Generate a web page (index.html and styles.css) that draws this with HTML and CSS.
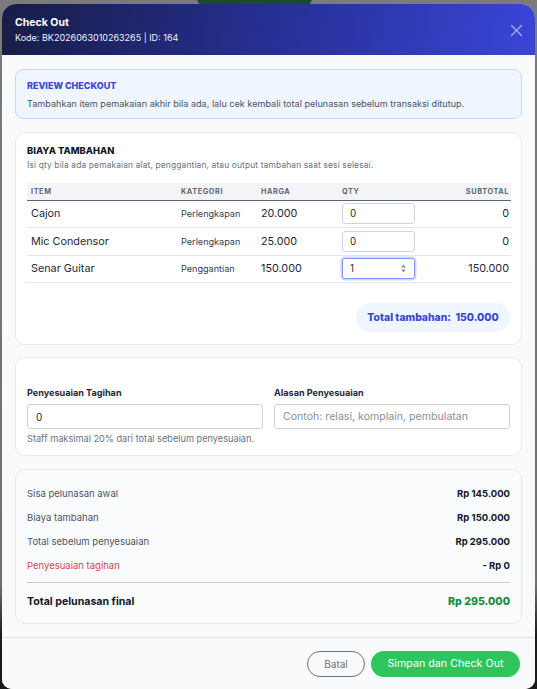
FILE: index.html
```html
<!DOCTYPE html>
<html lang="id">
<head>
<meta charset="utf-8">
<title>Check Out</title>
<link rel="stylesheet" href="styles.css">
</head>
<body>
<div class="backdrop">
  <div class="bg-pill"></div>
  <div class="modal">
    <header class="modal-head">
      <div class="head-text">
        <div class="title">Check Out</div>
        <div class="sub">Kode: BK2026063010263265 | ID: 164</div>
      </div>
      <svg class="close" width="13" height="13" viewBox="0 0 13 13"><path d="M1.5 1.5L11.5 11.5M11.5 1.5L1.5 11.5" stroke="#a9aeea" stroke-width="1.3" fill="none" stroke-linecap="round"/></svg>
    </header>
    <main class="modal-body">
      <section class="review">
        <div class="review-title">REVIEW CHECKOUT</div>
        <div class="review-text">Tambahkan item pemakaian akhir bila ada, lalu cek kembali total pelunasan sebelum transaksi ditutup.</div>
      </section>

      <section class="card card-items">
        <div class="card-title">BIAYA TAMBAHAN</div>
        <div class="card-sub">Isi qty bila ada pemakaian alat, penggantian, atau output tambahan saat sesi selesai.</div>
        <table class="items">
          <colgroup><col class="c-item"><col class="c-kat"><col class="c-harga"><col class="c-qty"><col class="c-sub"></colgroup>
          <thead>
            <tr><th>ITEM</th><th>KATEGORI</th><th>HARGA</th><th>QTY</th><th class="r">SUBTOTAL</th></tr>
          </thead>
          <tbody>
            <tr><td class="name">Cajon</td><td class="kat">Perlengkapan</td><td class="num">20.000</td><td><div class="qty">0</div></td><td class="num r">0</td></tr>
            <tr><td class="name">Mic Condensor</td><td class="kat">Perlengkapan</td><td class="num">25.000</td><td><div class="qty">0</div></td><td class="num r">0</td></tr>
            <tr><td class="name">Senar Guitar</td><td class="kat">Penggantian</td><td class="num">150.000</td><td><div class="qty focus"><span>1</span><svg class="spin" width="7" height="11" viewBox="0 0 7 11"><path d="M1 4.5L3.5 1.5L6 4.5Z" fill="#8a8f98"/><path d="M1 6.5L3.5 9.5L6 6.5Z" fill="#8a8f98"/></svg></div></td><td class="num r">150.000</td></tr>
          </tbody>
        </table>
        <div class="total-row"><div class="total-pill">Total tambahan:&nbsp; 150.000</div></div>
      </section>

      <section class="card card-adjust">
        <div class="field">
          <label class="lbl">Penyesuaian Tagihan</label>
          <div class="input">0</div>
          <div class="hint">Staff maksimal 20% dari total sebelum penyesuaian.</div>
        </div>
        <div class="field">
          <label class="lbl">Alasan Penyesuaian</label>
          <div class="input ph">Contoh: relasi, komplain, pembulatan</div>
        </div>
      </section>

      <section class="card card-sum">
        <div class="sum-row"><span>Sisa pelunasan awal</span><b>Rp 145.000</b></div>
        <div class="sum-row"><span>Biaya tambahan</span><b>Rp 150.000</b></div>
        <div class="sum-row"><span>Total sebelum penyesuaian</span><b>Rp 295.000</b></div>
        <div class="sum-row red"><span>Penyesuaian tagihan</span><b>- Rp 0</b></div>
        <div class="sum-final"><span>Total pelunasan final</span><b>Rp 295.000</b></div>
      </section>
    </main>
    <footer class="modal-foot">
      <button class="btn btn-cancel">Batal</button>
      <button class="btn btn-save">Simpan dan Check Out</button>
    </footer>
  </div>
</div>
</body>
</html>
```
FILE: styles.css
```css
* { box-sizing: border-box; }
html, body { margin: 0; padding: 0; }
body {
  font-family: Inter, "Noto Sans", "Liberation Sans", sans-serif;
  color: #111827;
  width: 537px;
  height: 689px;
  overflow: hidden;
}
.backdrop {
  position: relative;
  width: 537px;
  height: 689px;
  background: linear-gradient(180deg, #7b7b7b 0%, #6f6f6f 85%, #1d1d1d 92%, #1b1b1b 100%);
  padding: 4px 2px 0 2px;
}
.bg-pill {
  position: absolute;
  left: 197px;
  top: -10px;
  width: 115px;
  height: 16px;
  border-radius: 8px;
  background: #1c4a2c;
}
.modal {
  position: relative;
  height: 685px;
  border-radius: 14px 14px 10px 10px;
  overflow: hidden;
  background: #f8fafc;
  display: flex;
  flex-direction: column;
}
.modal-head {
  height: 51px;
  flex: none;
  background: linear-gradient(100deg, #171d46 0%, #262f93 50%, #3a45d8 100%);
  color: #fff;
  display: flex;
  align-items: center;
  justify-content: space-between;
  padding: 0 12px 0 13px;
}
.title { font-size: 10.5px; font-weight: 700; line-height: 14px; margin-top: 1px; }
.sub { font-size: 9px; line-height: 12px; margin-top: 2px; color: #eef0ff; }
.close { margin-top: 2px; }

.modal-body {
  flex: 1;
  padding: 14px 13px 0 13px;
  display: flex;
  flex-direction: column;
}
.review {
  background: #eff6ff;
  border: 1px solid #c3dafe;
  border-radius: 8px;
  padding: 10px 11px 9px 11px;
  height: 50px;
  margin-bottom: 13px;
}
.review-title { font-size: 9px; font-weight: 800; color: #3c46d4; line-height: 11px; }
.review-text { font-size: 9.1px; color: #4b5563; line-height: 12px; margin-top: 7px; }

.card {
  background: #fff;
  border: 1px solid #e8eaee;
  border-radius: 10px;
}
.card-items { padding: 12px 11px 11px 11px; height: 213px; margin-bottom: 12px; }
.card-title { font-size: 9.4px; font-weight: 800; color: #111827; line-height: 11px; }
.card-sub { font-size: 8.4px; letter-spacing: 0.15px; color: #6b7280; line-height: 11px; margin-top: 4px; }

.items {
  width: 484px;
  table-layout: fixed;
  border-collapse: collapse;
  margin-top: 12px;
}
.c-item { width: 150px; }
.c-kat { width: 80px; }
.c-harga { width: 81px; }
.c-qty { width: 84px; }
.c-sub { width: 89px; }
.items th {
  background: #f3f4f6;
  font-size: 7.3px;
  font-weight: 700;
  color: #5f6675;
  letter-spacing: 0.6px;
  text-align: left;
  height: 17px;
  padding: 0 4px;
  border-bottom: 1.5px solid #5c6678;
}
.items td {
  height: 27.5px;
  padding: 0 4px;
  border-bottom: 1px solid #e4e6ea;
  font-size: 10.8px;
  color: #1f2937;
}
.items td.kat { font-size: 9.1px; color: #374151; }
.items .r { text-align: right; padding-right: 2px; }
.qty {
  width: 73px;
  height: 21px;
  border: 1px solid #cfd3da;
  border-radius: 3px;
  font-size: 9.8px;
  color: #1f2937;
  display: flex;
  align-items: center;
  justify-content: space-between;
  padding: 0 7px;
}
.qty.focus {
  border-color: #7b9cf0;
  box-shadow: 0 0 0 1.5px #c9d8fb;
}
.total-row { display: flex; justify-content: flex-end; margin-top: 20px; }
.total-pill {
  background: #eff6ff;
  border-radius: 15px;
  height: 29px;
  width: 154px;
  display: flex;
  align-items: center;
  justify-content: center;
  font-size: 10.4px;
  font-weight: 800;
  color: #3c46d4;
}

.card-adjust {
  height: 99px;
  margin-bottom: 13px;
  padding: 29px 11px 0 11px;
  display: grid;
  grid-template-columns: 1fr 1fr;
  column-gap: 11px;
}
.lbl { display: block; font-size: 9.1px; font-weight: 700; color: #1f2937; line-height: 11px; }
.input {
  margin-top: 6px;
  height: 25px;
  border: 1px solid #cfd3da;
  border-radius: 3px;
  font-size: 10px;
  color: #1f2937;
  display: flex;
  align-items: center;
  padding: 0 8px;
}
.input.ph { color: #8a9099; font-size: 10.6px; }
.hint { font-size: 9.2px; color: #6b7280; margin-top: 4px; line-height: 11px; }

.card-sum {
  background: #fafbfd;
  height: 155px;
  padding: 11px 11px 0 11px;
}
.sum-row {
  display: flex;
  justify-content: space-between;
  align-items: center;
  height: 24px;
  font-size: 9.5px;
  color: #4b5563;
}
.sum-row b { color: #111827; font-weight: 700; }
.sum-row.red span { color: #dc4452; }
.sum-final {
  margin-top: 5px;
  border-top: 1px solid #c8cbd1;
  padding-top: 7px;
  display: flex;
  justify-content: space-between;
  align-items: center;
  height: 30px;
  font-size: 10.6px;
  font-weight: 700;
  color: #111827;
}
.sum-final b { color: #1a8a3e; font-weight: 800; }

.modal-foot {
  flex: none;
  height: 52px;
  border-top: 1px solid #e2e5ea;
  background: #f8fafc;
  display: flex;
  justify-content: flex-end;
  align-items: center;
  gap: 6px;
  padding: 0 15px 0 0;
}
.btn {
  font-family: Inter, "Noto Sans", "Liberation Sans", sans-serif;
  height: 26px;
  border-radius: 13px;
  font-size: 10px;
  cursor: pointer;
}
.btn-cancel {
  width: 58px;
  background: transparent;
  border: 1px solid #6b7280;
  color: #6b7280;
}
.btn-save {
  width: 149px;
  background: #2ec55d;
  border: none;
  color: #fff;
  font-size: 10.7px;
}
```
